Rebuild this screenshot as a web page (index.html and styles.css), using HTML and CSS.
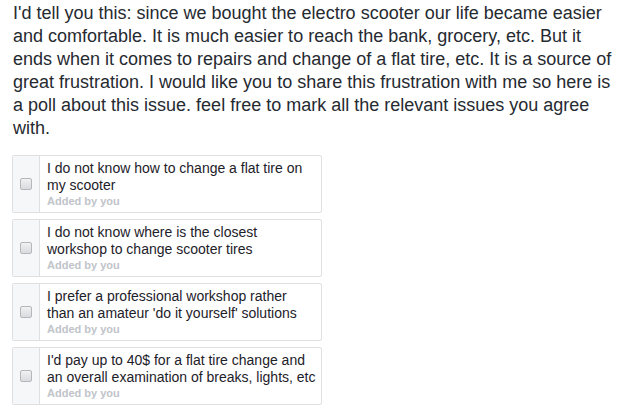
FILE: index.html
```html
<!DOCTYPE html>
<html>
<head>
<meta charset="utf-8">
<link rel="stylesheet" href="styles.css">
</head>
<body>
<div class="post">
  <p class="intro">I'd tell you this: since we bought the electro scooter our life became easier and comfortable. It is much easier to reach the bank, grocery, etc. But it ends when it comes to repairs and change of a flat tire, etc. It is a source of great frustration. I would like you to share this frustration with me so here is a poll about this issue. feel free to mark all the relevant issues you agree with.</p>
  <div class="poll">
    <div class="option">
      <div class="check"><span class="box"></span></div>
      <div class="body">
        <div class="label">I do not know how to change a flat tire on my scooter</div>
        <div class="meta">Added by you</div>
      </div>
    </div>
    <div class="option">
      <div class="check"><span class="box"></span></div>
      <div class="body">
        <div class="label">I do not know where is the closest workshop to change scooter tires</div>
        <div class="meta">Added by you</div>
      </div>
    </div>
    <div class="option">
      <div class="check"><span class="box"></span></div>
      <div class="body">
        <div class="label">I prefer a professional workshop rather than an amateur 'do it yourself' solutions</div>
        <div class="meta">Added by you</div>
      </div>
    </div>
    <div class="option">
      <div class="check"><span class="box"></span></div>
      <div class="body">
        <div class="label">I'd pay up to 40$ for a flat tire change and an overall examination of breaks, lights, etc</div>
        <div class="meta">Added by you</div>
      </div>
    </div>
  </div>
</div>
</body>
</html>
```
FILE: styles.css
```css
html, body {
  margin: 0;
  padding: 0;
  background: #ffffff;
}
body {
  font-family: "Liberation Sans", Arial, sans-serif;
  color: #1d2129;
}
.post {
  padding: 2px 0 0 13px;
}
.intro {
  margin: 0;
  width: 600px;
  font-size: 18px;
  line-height: 23px;
  color: #262a31;
}
.poll {
  margin-top: 15px;
  margin-left: -1px;
  display: flex;
  flex-direction: column;
  gap: 6px;
  width: 310px;
}
.option {
  display: flex;
  border: 1px solid #dddfe2;
  border-radius: 2px;
  height: 58px;
  box-sizing: border-box;
}
.check {
  width: 26px;
  flex: none;
  background: #f6f7f9;
  border-right: 1px solid #dddfe2;
  display: flex;
  align-items: center;
  justify-content: center;
}
.box {
  display: block;
  width: 10px;
  height: 10px;
  border: 1px solid #b4b7bb;
  border-radius: 2px;
  background: linear-gradient(#f0f1f2, #d9dbde);
}
.body {
  flex: 1;
  padding: 4px 4px 0 7px;
}
.label {
  font-size: 14px;
  line-height: 17px;
  color: #1d2129;
}
.meta {
  font-size: 11px;
  line-height: 14px;
  font-weight: bold;
  color: #c0c4ca;
}
```
